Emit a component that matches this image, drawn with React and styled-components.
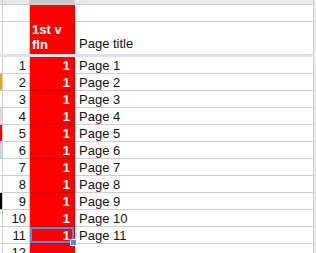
import styled, { createGlobalStyle } from 'styled-components';

const pages = Array.from({ length: 12 }, (_, i) => ({
  n: i + 1,
  flag: { 2: '#f7a10a', 4: '#ead5de', 5: '#ff0000', 6: '#c9d7f1', 9: '#000000' }[i + 1],
}));

const Global = createGlobalStyle`
  body {
    margin: 0;
    font-family: 'Liberation Sans', Arial, sans-serif;
    font-size: 13px;
    color: #111;
  }
`;

const Sheet = styled.div`
  width: 316px;
  height: 253px;
  overflow: hidden;
  background: #ececec;
`;

const Grid = styled.div`
  width: 314px;
  background: #fff;
`;

const Row = styled.div`
  display: grid;
  grid-template-columns: 3px 27px 45px 239px;
  height: ${(p) => p.$h}px;
`;

const Cell = styled.div`
  box-sizing: border-box;
  border-right: 1px solid #cdcdcd;
  border-bottom: ${(p) => (p.$flat ? 'none' : '1px solid #cdcdcd')};
  background: ${(p) => p.$bg || '#fff'};
`;

const Top = styled(Cell)`
  background: ${(p) => p.$bg || '#e9e9e9'};
`;

const Num = styled(Cell)`
  display: flex;
  align-items: center;
  justify-content: flex-end;
  padding-right: 3px;
`;

const Red = styled(Cell)`
  position: relative;
  display: flex;
  align-items: center;
  justify-content: flex-end;
  padding-right: 4px;
  background: #ff0000;
  border-bottom-color: ${(p) => (p.$open ? '#ff0000' : '#d50000')};
  border-right-color: #d50000;
  color: #fff;
  font-weight: bold;
  ${(p) =>
    p.$selected &&
    `
    box-shadow: inset 0 0 0 2px #4b8fe8;
    &::after {
      content: '';
      position: absolute;
      right: -3px;
      bottom: -3px;
      width: 5px;
      height: 5px;
      background: #4b8fe8;
      border: 1px solid #fff;
      z-index: 2;
    }
  `}
`;

const HeadRed = styled(Red)`
  align-items: flex-end;
  justify-content: flex-start;
  padding: 0 0 1px 2px;
  line-height: 15px;
`;

const Title = styled(Cell)`
  display: flex;
  align-items: ${(p) => (p.$bottom ? 'flex-end' : 'center')};
  padding: ${(p) => (p.$bottom ? '0 0 3px 4px' : '0 0 0 4px')};
`;

const Freeze = styled.div`
  height: 5px;
  background: #dde1e9;
`;

export default function App() {
  return (
    <Sheet>
      <Global />
      <Grid>
        <Row $h={5}>
          <Top />
          <Top />
          <Top $bg="#c7c7c7" />
          <Top />
        </Row>
        <Row $h={17}>
          <Cell />
          <Cell />
          <Red $open />
          <Cell />
        </Row>
        <Row $h={30}>
          <Cell $flat />
          <Cell $flat />
          <HeadRed $open>
            1st v
            <br />
            fln
          </HeadRed>
          <Title $bottom $flat>
            Page title
          </Title>
        </Row>
        <Freeze />
        {pages.map((p) => (
          <Row key={p.n} $h={17}>
            <Cell $bg={p.flag} />
            <Num>{p.n}</Num>
            {p.n < 12 ? <Red $selected={p.n === 11}>1</Red> : <Red />}
            <Title>{p.n < 12 ? `Page ${p.n}` : ''}</Title>
          </Row>
        ))}
      </Grid>
    </Sheet>
  );
}
